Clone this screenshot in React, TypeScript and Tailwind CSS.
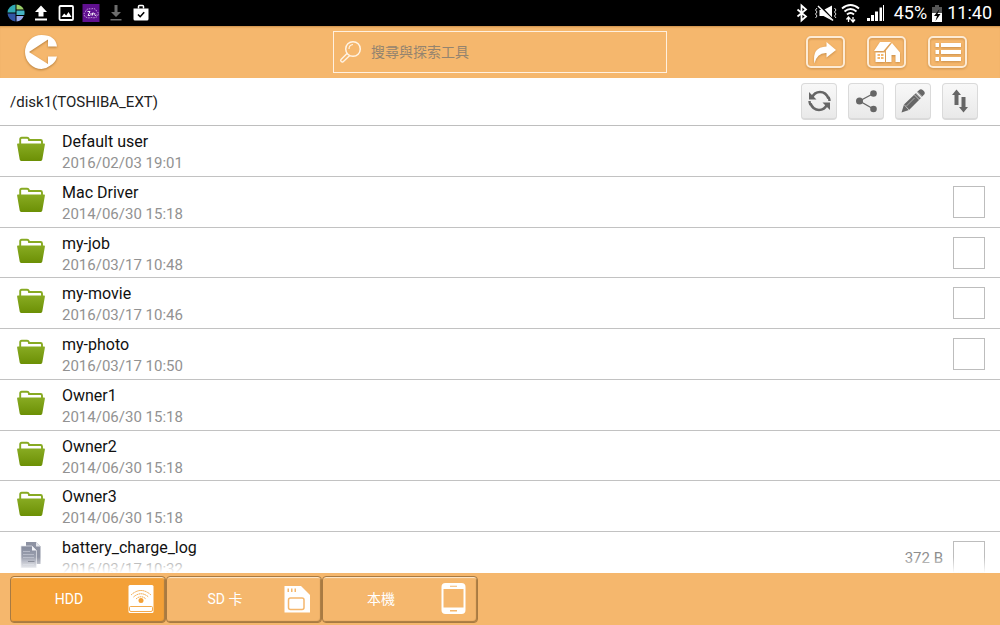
import type { ReactNode } from 'react';

type Entry = {
  name: string;
  date: string;
  size?: string;
  selectable?: boolean;
};

const folders: Entry[] = [
  { name: 'Default user', date: '2016/02/03 19:01' },
  { name: 'Mac Driver', date: '2014/06/30 15:18', selectable: true },
  { name: 'my-job', date: '2016/03/17 10:48', selectable: true },
  { name: 'my-movie', date: '2016/03/17 10:46', selectable: true },
  { name: 'my-photo', date: '2016/03/17 10:50', selectable: true },
  { name: 'Owner1', date: '2014/06/30 15:18' },
  { name: 'Owner2', date: '2014/06/30 15:18' },
  { name: 'Owner3', date: '2014/06/30 15:18' },
];

const logFile: Entry = { name: 'battery_charge_log', date: '2016/03/17 10:32', size: '372 B', selectable: true };

function FolderIcon() {
  return (
    <svg className="h-[26px] w-7 shrink-0" viewBox="0 0 28 26">
      <defs>
        <linearGradient id="folder" x1="0" y1="0" x2="0" y2="1">
          <stop offset="0" stopColor="#88ab22" />
          <stop offset="1" stopColor="#6c9005" />
        </linearGradient>
      </defs>
      <path d="M3.200 8V3.300Q3.200 1.800 4.700 1.800h5.500q1.200 0 1.500 1l.3 1.200h11.500q1.500 0 1.500 1.500V8" fill="none" stroke="#87aa22" strokeWidth="1.900" />
      <path d="M.8 7.600h26.400q.8 0 .7.900L25.300 23.600q-.2 1.400-1.500 1.400H4.200q-1.300 0-1.500-1.400L.1 8.500q-.1-.9.700-.9z" fill="url(#folder)" />
    </svg>
  );
}

function FilesIcon() {
  return (
    <svg className="h-[26px] w-7 shrink-0" viewBox="0 0 28 26">
      <defs>
        <linearGradient id="sheet" x1="0" y1="0" x2="0" y2="1">
          <stop offset="0" stopColor="#858b9d" />
          <stop offset="1" stopColor="#b0b4c0" />
        </linearGradient>
      </defs>
      <path d="M9 0h10l4.500 4.500V22H9z" fill="#8e93a3" />
      <path d="M19 0v4.500h4.500z" fill="#e4e6ec" />
      <path d="M4 4h11l4.500 4.500V26H4z" fill="url(#sheet)" stroke="#e6e8ee" strokeWidth=".7" />
      <path d="M15 4v4.500h4.500z" fill="#f3f4f8" />
      <path d="M6 9.500h7M6 12.500h11M6 15.500h11M6 22.500h11" stroke="#bfc3cf" strokeWidth=".8" />
      <path d="M11 19.500h6.500" stroke="#5e6373" strokeWidth="1" />
    </svg>
  );
}

function StatusIcon({ children }: { children: ReactNode }) {
  return (
    <svg className="h-[18px] w-[18px]" viewBox="0 0 18 18" fill="none">
      {children}
    </svg>
  );
}

function StatusBar() {
  return (
    <div className="flex h-[26px] shrink-0 items-center justify-between bg-black pr-2 pl-[7px] text-white">
      <div className="flex items-center gap-[7px]">
        <StatusIcon>
          <path d="M8.500.5v8H.5A8.500 8.500 0 0 1 8.500.5z" fill="#31a9b4" />
          <path d="M9.500.5a8.500 8.500 0 0 1 7.300 5H9.500z" fill="#9bd06a" />
          <path d="M9.500 6.500h7.800q.5 2 0 4.500H9.500z" fill="#46b3c4" />
          <path d="M.5 9.500h8v8a8.500 8.500 0 0 1-8-8z" fill="#3155a5" />
          <path d="M9.500 12h7.200a8.500 8.500 0 0 1-7.200 5.500z" fill="#96a8ec" />
        </StatusIcon>
        <StatusIcon>
          <path d="M9 1.500 15 8h-3.500v4.500h-5V8H3zM3 14.500h12v2H3z" fill="#fff" />
        </StatusIcon>
        <StatusIcon>
          <rect x="2.500" y="2" width="13.500" height="14" rx="1" stroke="#fff" strokeWidth="1.800" />
          <path d="m4.500 13 2.700-3.500 2 2L11.500 8l3 5z" fill="#fff" />
        </StatusIcon>
        <StatusIcon>
          <path d="M.5 0h17v18H.500z" fill="#60108f" />
          <path d="M3 12.500q-2-2.500.5-5Q5 4 9 5q4-1.500 5.500 2 3 2 1 5-2 2.500-6 1.500-4 1-6.500-1z" stroke="#d7b5e8" strokeWidth=".9" strokeDasharray="1.500 1" />
          <path d="M5.500 7.500h2.500l-2 4h2M9 9v2.500M10.500 11.500V9l1.500.2M13 9q-1.500 1.500 0 2.500l1.500-.5" stroke="#fff" strokeWidth=".9" />
        </StatusIcon>
        <StatusIcon>
          <path d="M7.500 1h3v7H14l-5 5-5-5h3.500zM3.500 15h11v1.500h-11z" fill="#6d6d6d" />
        </StatusIcon>
        <StatusIcon>
          <path d="M1.500 4.500h15V15q0 1.500-1.500 1.500H3q-1.500 0-1.500-1.500z" fill="#fff" />
          <path d="M6.500 4.500v-2q0-1 1-1h3q1 0 1 1v2" stroke="#fff" strokeWidth="1.500" />
          <path d="m6 10.500 2.200 2.200 4-4.500" stroke="#000" strokeWidth="1.600" />
        </StatusIcon>
      </div>

      <div className="flex items-center text-lg leading-none">
        <svg className="h-5 w-[100px]" viewBox="0 0 100 20" fill="none">
          <path d="m3.500 6.500 8.500 7-4.500 4v-15l4.500 4-8.500 7" stroke="#fff" strokeWidth="1.800" />
          {/* vibrate, sound off */}
          <path d="M25.500 7h4L38 2.500v15L29.500 13h-4z" fill="#fff" />
          <path d="m25.500 2.500 14 15" stroke="#000" strokeWidth="2.200" />
          <path d="m24 3 15 14.500" stroke="#fff" strokeWidth="1.400" />
          <path d="m23 5-1.500 2 1.500 2-1.500 2 1.500 2-1.500 2M40.500 5 42 7l-1.500 2 1.500 2-1.500 2 1.500 2" stroke="#ddd" strokeWidth="1" />
          {/* wifi */}
          <path d="M48 5.500q8.500-7 17 0M50.500 8.500q6-5 12 0M53 11.500q3.500-3 7 0" stroke="#fff" strokeWidth="1.900" />
          <path d="M54.500 19v-5m-2 2.500 2-2.500 2 2.500M59 14v5m-2-2.500 2 2.500 2-2.500" stroke="#fff" strokeWidth="1.300" />
          {/* signal */}
          <path d="M73 15h3v3h-3zM77 12h3v6h-3zM81 8.500h3V18h-3zM85.500 4.500H88V18h-2.500z" fill="#fff" />
          <path d="M89 2h1v16h-1z" fill="#fff" />
        </svg>
        <span>45%</span>
        <svg className="mx-1 h-[18px] w-3" viewBox="0 0 12 18">
          <path d="M4 1h4v2h3v15H1V3h3z" fill="#555" />
          <path d="M1 9h10v9H1z" fill="#fff" />
          <path d="M8.500 5 3 12h3l-1.500 5L9.500 10H6.500z" fill="#000" />
        </svg>
        <span>11:40</span>
      </div>
    </div>
  );
}

function HeaderButton({ label, children }: { label: string; children: ReactNode }) {
  return (
    <button
      type="button"
      aria-label={label}
      className="flex h-8 w-[39px] items-center justify-center rounded-[5px] border-2 border-[#fdebd5] drop-shadow-[0_1px_1px_rgba(120,70,10,0.35)]"
    >
      <svg className="h-7 w-[35px] shrink-0" viewBox="0 0 35 28" fill="#fff">
        {children}
      </svg>
    </button>
  );
}

function Header() {
  return (
    <header className="grid h-[52px] shrink-0 grid-cols-[1fr_2fr_1fr] items-center bg-[#f5b76d] px-6 shadow-[inset_0_2px_2px_-1px_rgba(120,70,10,0.35)] sm:grid-cols-[1fr_334px_1fr]">
      <button type="button" aria-label="返回" className="w-[34px]">
        <svg className="h-9 w-[34px] drop-shadow-[0_1px_1px_rgba(120,70,10,0.5)]" viewBox="0 0 34 36">
          <path d="M17.500 1A16.500 17 0 0 0 17.500 35Q22 35 25.500 32V31L5 18 24 5.500V12.500H33Q31.500 1 17.500 1z" fill="#fff" />
          <path d="M24 22.500h9Q31.500 29 25.500 32H24z" fill="#fff" />
        </svg>
      </button>

      <label className="flex h-[42px] items-center gap-2 border border-[#fff0df] pl-1">
        <svg className="ml-px h-6 w-6 shrink-0" viewBox="0 0 24 24" fill="none" stroke="#fff3e4">
          <circle cx="14" cy="9" r="7.300" strokeWidth="1.500" />
          <path d="M10 9q0-4 4-4.500" strokeWidth="1.200" />
          <path d="m8.500 13-6.500 6.500q-.8 1 .2 2t2 .2L11 15.200" strokeWidth="1.400" />
        </svg>
        <input
          type="text"
          aria-label="搜尋"
          placeholder="搜尋與探索工具"
          className="min-w-0 flex-1 bg-transparent text-sm text-[#5f5a55] outline-none placeholder:text-[#94846f]"
        />
      </label>

      <div className="flex justify-end gap-[22px] pr-[9px]">
        <HeaderButton label="分享">
          <path d="M6.500 25.500Q3.500 9 18.500 8.500V4L28 12l-9.500 7.500v-4.500Q9 14.500 6.500 25.500z" />
        </HeaderButton>
        <HeaderButton label="首頁">
          <path d="M11 4h11L14.500 13H5zM23 5l8 9.500V24h-4.500v-7h-4v7H17V12.500zM6.500 14.500h9.500V24H6.500z" />
          <path d="M8.500 16h2.500v2H8.500zm3.500 0h2.500v2H12zm-3.500 3h2.500v2H8.500zm3.500 0h2.500v2H12z" fill="#f5b76d" />
        </HeaderButton>
        <HeaderButton label="選單">
          <path d="M5.500 5H9v4H5.500zm0 7H9v4H5.500zm0 7H9v4H5.500zM11 5h20v4H11zm0 7h20v4H11zm0 7h20v4H11z" />
        </HeaderButton>
      </div>
    </header>
  );
}

function ToolButton({ label, children }: { label: string; children: ReactNode }) {
  return (
    <button
      type="button"
      aria-label={label}
      className="flex h-[37px] w-9 items-center justify-center rounded-sm border border-b-2 border-[#dadada] bg-linear-to-b from-[#f8f8f8] to-[#e9e9e9]"
    >
      <svg className="h-6 w-6 shrink-0" viewBox="0 0 24 24" fill="none" stroke="#666">
        {children}
      </svg>
    </button>
  );
}

function PathBar() {
  return (
    <div className="flex h-12 shrink-0 items-center justify-between border-b border-[#bebebe] pr-[22px] pl-2.5">
      <p className="text-[15px] leading-5 text-[#222]">/disk1(TOSHIBA_EXT)</p>
      <div className="flex gap-[11px]">
        <ToolButton label="重新整理">
          <path d="M5 8.500Q7.500 3 13 3q6 0 8.500 6.500M20 15.500Q17.500 21 12 21q-6 0-8.500-6.500" strokeWidth="2.600" />
          <path d="M2 3v7.500h7.500zM23 21v-7.500h-7.500z" fill="#666" stroke="none" />
          <path d="M2.500 12q0 2 1 4M22.500 12q0-2-1-4" strokeWidth="2.400" />
        </ToolButton>
        <ToolButton label="共用">
          <path d="M19.500 4.500 5.500 12l14 8" strokeWidth="1.300" />
          <g fill="#666" stroke="none">
            <circle cx="19.500" cy="4.500" r="3.300" />
            <circle cx="5.500" cy="12" r="3.500" />
            <circle cx="19.500" cy="20" r="3.300" />
          </g>
        </ToolButton>
        <ToolButton label="編輯">
          <path d="m.5 23.500 2.500-8L15 4l5 5L8 21zM16 3l2.500-2.200q1.500-1.200 3.800.8t1.100 3.700L20.800 8z" fill="#666" stroke="none" />
          <path d="m13 5.500 5.500 5.500M14.500 4l5.500 5.500M16 2.500l5.500 5.500" stroke="#e4e4e4" strokeWidth=".7" />
          <path d="m5.500 17 8-8" stroke="#bbb" strokeWidth=".8" />
          <path d="m3 15.500 5 5.500" stroke="#e8e8e8" strokeWidth=".7" />
        </ToolButton>
        <ToolButton label="排序">
          <path d="M8.500.5 13 6h-2.500v10h-4V6H4zM15.500 23.500 11 18h2.500V8h4v10H20z" fill="#666" stroke="none" />
        </ToolButton>
      </div>
    </div>
  );
}

function EntryRow({ entry, icon }: { entry: Entry; icon: ReactNode }) {
  return (
    <li className="flex items-start border-b border-[#c2c2c2] pr-[15px] pl-[17px] last:border-b-0">
      <div className="mt-2.5">{icon}</div>
      <div className="mt-[5px] ml-[17px] min-w-0 flex-1">
        <p className="truncate text-base leading-[22px] text-[#111]">{entry.name}</p>
        <p className="text-[15px] leading-5 text-[#929292]">{entry.date}</p>
      </div>
      {entry.size && <span className="mt-4 mr-2.5 text-[15px] leading-5 text-[#8d8d8d]">{entry.size}</span>}
      {entry.selectable && (
        <input
          type="checkbox"
          aria-label={entry.name}
          className="mt-[9px] h-8 w-8 shrink-0 appearance-none border border-[#bdbdbd] bg-white checked:bg-[#f5b76d]"
        />
      )}
    </li>
  );
}

function StorageTab({ label, active, children }: { label: string; active?: boolean; children: ReactNode }) {
  return (
    <button
      type="button"
      className={
        'flex h-[47px] w-[156px] items-center rounded-sm border border-[#a87a42] pr-2.5 text-sm text-white shadow-[inset_0_2px_1px_-1px_#ffe9cc,inset_-1px_-1px_1px_#a87a42] ' +
        (active ? 'bg-[#f3a037]' : 'bg-[#f5b76d]')
      }
    >
      <span className="flex-1 text-center">{label}</span>
      <svg className="h-8 w-7 shrink-0" viewBox="0 0 28 32" fill="#fff">
        {children}
      </svg>
    </button>
  );
}

export default function App() {
  return (
    <div className="flex h-screen flex-col overflow-hidden bg-white font-[Roboto,'Noto_Sans_CJK_TC',sans-serif]">
      <StatusBar />
      <Header />
      <PathBar />

      {/* File list, last row runs under the storage bar */}
      <main className="relative min-h-0 flex-1">
        <ul className="grid h-full grid-rows-[repeat(8,minmax(0,1fr))_41px]">
          {folders.map((entry) => (
            <EntryRow key={entry.name} entry={entry} icon={<FolderIcon />} />
          ))}
          <EntryRow entry={logFile} icon={<FilesIcon />} />
        </ul>
        <div className="pointer-events-none absolute inset-x-0 bottom-0 h-4 bg-linear-to-b from-white/0 to-white" />
      </main>

      <nav className="relative flex h-[52px] shrink-0 items-center bg-[#f5b76d] px-2.5">
        <StorageTab label="HDD" active>
          <path d="M3 2h22q1.500 0 1.500 1.500v25q0 1.500-1.500 1.500H3q-1.500 0-1.500-1.500v-25Q1.500 2 3 2z" />
          <g fill="none" stroke="#f3a037">
            <path d="M4 12Q14 3 24 12" strokeWidth="1" strokeDasharray="1.500 .6" />
            <path d="M6.500 14q7.500-6.500 15 0" strokeWidth="1" strokeDasharray="1.500 .6" />
            <path d="M9 16q5-4.500 10 0" strokeWidth="1" strokeDasharray="1.500 .6" />
            <path d="M2.500 24.500q0-1 1-1h21q1 0 1 1V27q0 1.500-1.500 1.500H4q-1.500 0-1.500-1.500z" strokeWidth=".9" />
          </g>
          <circle cx="14" cy="17.500" r="2.500" fill="#f3a037" />
        </StorageTab>
        <StorageTab label="SD 卡">
          <path d="M1.500 3H18l9 9v17.500H1.500z" />
          <path d="M4.500 5.500H6V9H4.500zm3.500 0h1.500V9H8zm3.500 0H13V9h-1.500z" fill="#f5b76d" />
          <rect x="5.500" y="15" width="15.500" height="11.500" rx="2" fill="none" stroke="#f5b76d" strokeWidth="1.500" />
        </StorageTab>
        <StorageTab label="本機">
          <rect x="2.500" y="0" width="24" height="31" rx="4" />
          <path d="M4.500 6h20v18.500h-20zM11 2.800h7v1h-7zM11 27h7v1.500h-7z" fill="#f5b76d" />
        </StorageTab>
      </nav>
    </div>
  );
}
